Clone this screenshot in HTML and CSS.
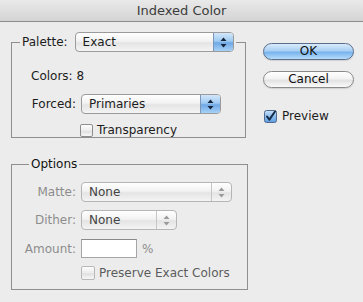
FILE: index.html
```html
<!DOCTYPE html>
<html lang="en">

<head>
    <meta charset="UTF-8" />
    <title>Indexed Color</title>
    <link rel="stylesheet" href="styles.css">
</head>

<body>
    <div class="window">
        <div class="titlebar">Indexed Color</div>

        <div class="content">
            <div class="groups">
                <fieldset class="group group-palette">
                    <legend class="group-title">
                        <span class="legend-row">
                            <span class="legend-label">Palette:</span>
                            <span class="popup popup-palette">
                                <span class="popup-text">Exact</span>
                                <span class="stepper">
                                    <svg width="7" height="11" viewBox="0 0 7 11">
                                        <path d="M3.5 0.5 L6.5 4 L0.5 4 Z" />
                                        <path d="M3.5 10.5 L6.5 7 L0.5 7 Z" />
                                    </svg>
                                </span>
                            </span>
                        </span>
                    </legend>

                    <div class="colors-row">Colors: 8</div>

                    <div class="field-row field-forced">
                        <span class="field-label">Forced:</span>
                        <span class="popup popup-forced">
                            <span class="popup-text">Primaries</span>
                            <span class="stepper">
                                <svg width="7" height="11" viewBox="0 0 7 11">
                                    <path d="M3.5 0.5 L6.5 4 L0.5 4 Z" />
                                    <path d="M3.5 10.5 L6.5 7 L0.5 7 Z" />
                                </svg>
                            </span>
                        </span>
                    </div>

                    <label class="check check-transparency">
                        <span class="box"></span>
                        <span>Transparency</span>
                    </label>
                </fieldset>

                <fieldset class="group group-options">
                    <legend class="group-title options-title">Options</legend>

                    <div class="field-row field-matte">
                        <span class="field-label disabled">Matte:</span>
                        <span class="popup popup-off popup-matte">
                            <span class="popup-text">None</span>
                            <span class="stepper">
                                <svg width="7" height="11" viewBox="0 0 7 11">
                                    <path d="M3.5 0.5 L6.5 4 L0.5 4 Z" />
                                    <path d="M3.5 10.5 L6.5 7 L0.5 7 Z" />
                                </svg>
                            </span>
                        </span>
                    </div>

                    <div class="field-row field-dither">
                        <span class="field-label disabled">Dither:</span>
                        <span class="popup popup-off popup-dither">
                            <span class="popup-text">None</span>
                            <span class="stepper">
                                <svg width="7" height="11" viewBox="0 0 7 11">
                                    <path d="M3.5 0.5 L6.5 4 L0.5 4 Z" />
                                    <path d="M3.5 10.5 L6.5 7 L0.5 7 Z" />
                                </svg>
                            </span>
                        </span>
                    </div>

                    <div class="field-row field-amount">
                        <span class="field-label disabled">Amount:</span>
                        <span class="amount-input"></span>
                        <span class="percent">%</span>
                    </div>

                    <label class="check check-preserve disabled-check">
                        <span class="box"></span>
                        <span>Preserve Exact Colors</span>
                    </label>
                </fieldset>
            </div>

            <div class="actions">
                <button class="btn btn-default">OK</button>
                <button class="btn btn-cancel">Cancel</button>
                <label class="check check-preview">
                    <svg class="box-checked" width="13" height="13" viewBox="0 0 13 13">
                        <defs>
                            <linearGradient id="blueBox" x1="0" y1="0" x2="0" y2="1">
                                <stop offset="0" stop-color="#c9e1f7" />
                                <stop offset="0.5" stop-color="#8cbdec" />
                                <stop offset="1" stop-color="#5d9ce0" />
                            </linearGradient>
                        </defs>
                        <rect x="0.5" y="0.5" width="12" height="12" rx="2" fill="url(#blueBox)" stroke="#51698c" />
                        <path d="M3 6.5 L5.4 9.6 L11 1.5" fill="none" stroke="#162a48" stroke-width="2" stroke-linecap="round" stroke-linejoin="round" />
                    </svg>
                    <span>Preview</span>
                </label>
            </div>
        </div>
    </div>
</body>

</html>
```

FILE: styles.css
```css
html,
body {
    margin: 0;
    padding: 0;
}

body {
    width: 363px;
    height: 302px;
    overflow: hidden;
    background-color: #ececec;
    font-family: "DejaVu Sans", "Liberation Sans", sans-serif;
    font-size: 12px;
    color: #1c1c1c;
}

.titlebar {
    height: 21px;
    line-height: 21px;
    text-align: center;
    font-size: 13px;
    color: #3c3c3c;
    background: linear-gradient(#e9e9e9, #d4d4d4);
    border-bottom: 1px solid #8d8d8d;
}

.content {
    display: flex;
    padding: 10px 0 0 11px;
}

.groups {
    width: 237px;
}

/* group boxes */

.group {
    margin: 0;
    border: 1px solid #8f8f8f;
    padding: 0 8px;
    box-sizing: border-box;
}

.group-title {
    padding: 0 2px;
}

.group-palette {
    width: 235px;
    padding-top: 16px;
    padding-bottom: 0;
}

.group-options {
    width: 237px;
    margin-top: 18px;
    padding-top: 10px;
    padding-bottom: 9px;
}

.options-title {
    margin-left: 9px;
    line-height: 16px;
    color: #111;
}

.legend-row {
    display: flex;
    align-items: center;
}

.legend-label {
    margin-right: 7px;
}

.colors-row {
    margin-left: 11px;
    line-height: 16px;
}

.field-row {
    display: flex;
    align-items: center;
}

.field-label {
    width: 56px;
    text-align: right;
    margin-right: 5px;
}

.disabled {
    color: #8c8c8c;
}

.field-forced {
    margin-top: 10px;
}

.field-dither {
    margin-top: 8px;
}

.field-amount {
    margin-top: 9px;
}

/* popup menus */

.popup {
    display: flex;
    height: 20px;
    box-sizing: border-box;
    border: 1px solid #9b9b9b;
    border-radius: 4px;
    background: linear-gradient(#ffffff, #f2f2f2 45%, #e4e4e4 55%, #f4f4f4);
    overflow: hidden;
}

.popup-palette {
    width: 159px;
}

.popup-forced {
    width: 140px;
}

.popup-matte {
    width: 151px;
}

.popup-dither {
    width: 96px;
}

.popup-text {
    flex: 1;
    padding-left: 7px;
    line-height: 18px;
}

.stepper {
    width: 19px;
    display: flex;
    align-items: center;
    justify-content: center;
    border-left: 1px solid #7c96b8;
    background: linear-gradient(#d3e7fa, #9fcaf2 45%, #6fa8e6 55%, #a8d2f6);
}

.stepper svg {
    fill: #17253a;
}

.popup-off {
    border-color: #b5b5b5;
}

.popup-off .popup-text {
    color: #444;
}

.popup-off .stepper {
    border-left: 1px solid #c6c6c6;
    background: none;
}

.popup-off .stepper svg {
    fill: #9a9a9a;
}

.amount-input {
    width: 56px;
    height: 19px;
    box-sizing: border-box;
    background: #fff;
    border: 1px solid #a5a5a5;
    border-top-color: #8a8a8a;
}

.percent {
    margin-left: 5px;
    color: #8c8c8c;
}

/* checkboxes */

.check {
    display: flex;
    align-items: center;
    line-height: 14px;
}

.box {
    width: 13px;
    height: 13px;
    box-sizing: border-box;
    border: 1px solid #8e8e8e;
    border-radius: 2px;
    background: linear-gradient(#fdfdfd, #ececec 50%, #e0e0e0 55%, #f7f7f7);
    margin-right: 4px;
}

.check-transparency {
    margin-top: 9px;
    margin-left: 60px;
}

.check-preserve {
    margin-top: 8px;
    margin-left: 61px;
}

.disabled-check {
    color: #5c5c5c;
}

.disabled-check .box {
    border-color: #b8b8b8;
    width: 14px;
    height: 14px;
}

/* right column */

.actions {
    margin-left: 15px;
    padding-top: 11px;
    display: flex;
    flex-direction: column;
    align-items: flex-start;
}

.btn {
    width: 91px;
    height: 17px;
    padding: 0;
    margin: 0;
    border-radius: 9px;
    font-family: "DejaVu Sans", "Liberation Sans", sans-serif;
    font-size: 12px;
    line-height: 15px;
    color: #111;
    border: 1px solid #8a8a8a;
    background: linear-gradient(#ffffff, #f3f3f3 45%, #e2e2e2 55%, #fafafa);
    box-shadow: 0 1px 1px rgba(0, 0, 0, 0.12);
}

.btn-default {
    border-color: #5b6f8d;
    background: linear-gradient(#d8eafb, #a9d0f4 45%, #79b3ec 55%, #b5dcfb);
}

.btn-cancel {
    margin-top: 11px;
}

.check-preview {
    margin-top: 21px;
    margin-left: 1px;
}

.box-checked {
    margin-right: 5px;
}
```
